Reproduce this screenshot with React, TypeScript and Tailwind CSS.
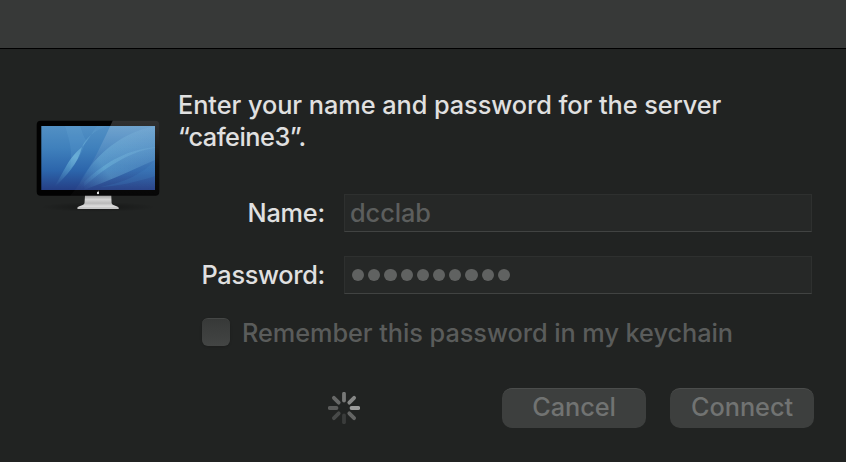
import React from "react";

function Display() {
  return (
    <svg width="136" height="100" viewBox="30 115 136 100" className="block" aria-hidden="true">
      <defs>
        <linearGradient id="sky" x1="0" y1="0" x2="0" y2="1">
          <stop offset="0" stopColor="#5290c4" />
          <stop offset="0.35" stopColor="#3f80bc" />
          <stop offset="0.7" stopColor="#2c65ab" />
          <stop offset="1" stopColor="#253f86" />
        </linearGradient>
        <linearGradient id="ray" gradientUnits="userSpaceOnUse" x1="55" y1="186" x2="96" y2="128">
          <stop offset="0" stopColor="#70c0e0" stopOpacity="0" />
          <stop offset="0.5" stopColor="#86d0e8" stopOpacity="0.6" />
          <stop offset="1" stopColor="#86c8ea" stopOpacity="0.08" />
        </linearGradient>
        <linearGradient id="sweep" gradientUnits="userSpaceOnUse" x1="82" y1="190" x2="155" y2="140">
          <stop offset="0" stopColor="#5fb0dc" stopOpacity="0" />
          <stop offset="0.35" stopColor="#78c8e6" stopOpacity="0.45" />
          <stop offset="1" stopColor="#8accec" stopOpacity="0.14" />
        </linearGradient>
        <linearGradient id="glare" x1="0" y1="0" x2="0" y2="1">
          <stop offset="0" stopColor="#fff" stopOpacity="0.19" />
          <stop offset="0.6" stopColor="#fff" stopOpacity="0.05" />
          <stop offset="1" stopColor="#fff" stopOpacity="0.02" />
        </linearGradient>
        <linearGradient id="stand" x1="0" y1="0" x2="0" y2="1">
          <stop offset="0" stopColor="#a4a4a4" />
          <stop offset="0.3" stopColor="#d4d4d4" />
          <stop offset="0.6" stopColor="#b9b9b9" />
          <stop offset="0.85" stopColor="#dedede" />
          <stop offset="1" stopColor="#b0b0b0" />
        </linearGradient>
        <radialGradient id="shade">
          <stop offset="0" stopColor="#000" stopOpacity="0.35" />
          <stop offset="1" stopColor="#000" stopOpacity="0" />
        </radialGradient>
        <clipPath id="screen"><rect x="41.3" y="126" width="113.7" height="64" /></clipPath>
        <clipPath id="bezel"><rect x="36.7" y="120.7" width="122.6" height="75" rx="4" /></clipPath>
      </defs>
      <ellipse cx="98" cy="207" rx="58" ry="5" fill="url(#shade)" />
      <rect x="36.7" y="120.7" width="122.6" height="75" rx="4" fill="#020202" />
      <g clipPath="url(#screen)">
        <rect x="41" y="126" width="114" height="64" fill="url(#sky)" />
        <path d="M52 190C64 174 66 160 82 147C87 142 92 133 97 126H108C94 130 86 138 82 147C78 164 66 176 52 190Z" fill="url(#ray)" />
        <path d="M65 126C70 142 73 153 70 169C79 161 83 150 86 140C82 134 82 130 80 126Z" fill="#75bbe2" opacity="0.14" />
        <path d="M80 182C92 160 116 134 155 126V148C130 151 104 168 80 190Z" fill="url(#sweep)" opacity="0.75" />
        <path d="M84 182C108 160 128 150 155 147V160C128 172 108 181 84 190Z" fill="url(#sweep)" opacity="0.75" />
        <path d="M100 187C122 183 142 175 155 160V176C138 182 118 186 100 187Z" fill="#3d85c4" opacity="0.22" />
      </g>
      <path d="M113 120H160V196H70C86 178 101 146 113 120Z" fill="url(#glare)" clipPath="url(#bezel)" />
      <ellipse cx="98" cy="193" rx="1.1" ry="1.2" fill="#ededed" />
      <path d="M98.1 191.9Q98.3 191 99 191" stroke="#ddd" strokeWidth=".6" fill="none" />
      <path d="M95 195.8H121.3L121.6 203C122 206 128.8 205.8 128.8 208.2H87.3C87.3 205.8 94 206 94.5 203Z" fill="url(#stand)" transform="translate(-10 0)" />
      <path d="M77.5 208.3H118.7" stroke="#e9e9e9" strokeWidth="1" />
    </svg>
  );
}

const spokes = ["#9b9c9b", "#646564", "#3a3c3b", "#484a49", "#5a5b5a", "#676867", "#777877", "#868786"];

function Spinner() {
  return (
    <svg width="32" height="32" viewBox="-16 -16 32 32" aria-label="Loading">
      {spokes.map((color, i) => (
        <path key={i} d="M7.5 0H14.3" stroke={color} strokeWidth="3.8" strokeLinecap="round" transform={`rotate(${i * 45})`} />
      ))}
    </svg>
  );
}

function Field({ children }: { children: React.ReactNode }) {
  return (
    <div className="flex h-[38px] w-[468px] items-center border border-[#2e302f] border-b-[#414342] bg-[#262827] pl-[5px] text-[#5c5e5d]">
      {children}
    </div>
  );
}

export default function App() {
  return (
    <main className="h-[462px] w-[846px] overflow-hidden bg-[#212322] font-['Inter',sans-serif] text-[25.3px] font-[450] leading-8 tracking-[-0.05px] text-[#e0e0e0]">
      <header className="h-[49px] border-b border-black bg-[#373938]" />
      <div className="flex">
        <div className="w-[178px] shrink-0 pl-[30px] pt-[66px]"><Display /></div>
        <h1 className="whitespace-nowrap pt-10 font-[450]">
          <span className="block w-fit">Enter your name and password for the server</span>
          <span className="block w-fit tracking-[-0.5px]">“cafeine3”.</span>
        </h1>
      </div>
      <form className="-mt-[21px]">
        <div className="flex gap-[18px]">
          <div className="flex h-[38px] w-[326px] items-center justify-end pr-px"><span className="tracking-[-0.2px]">Name:</span></div>
          <Field><span>dcclab</span></Field>
        </div>
        <div className="mt-6 flex gap-[18px]">
          <div className="flex h-[38px] w-[326px] items-center justify-end pr-px"><span className="tracking-[-0.3px]">Password:</span></div>
          <Field>
            <span className="flex gap-1 pl-0.5">
              {Array.from({ length: 10 }, (_, i) => <i key={i} className="size-[12.2px] rounded-full bg-[#606261]" />)}
            </span>
          </Field>
        </div>
        <div className="mt-6 flex h-7 items-center gap-3 pl-[202px] text-[#5a5c5b]">
          <div className="size-7 rounded-[6px] border-t border-[#454746] bg-linear-to-b from-[#373938] to-[#434544] shadow-sm" />
          <span className="whitespace-nowrap pt-0.5">Remember this password in my keychain</span>
        </div>
        <div className="mt-[42px] flex h-10 items-center pl-[328px] text-[#717372]">
          <Spinner />
          <button className="ml-[142px] flex h-10 w-36 items-center justify-center rounded-[10px] border-t border-[#4b4d4c] bg-[#3d3f3e] pb-1"><span>Cancel</span></button>
          <button className="ml-6 flex h-10 w-36 items-center justify-center rounded-[10px] border-t border-[#4b4d4c] bg-[#3d3f3e] pb-1"><span>Connect</span></button>
        </div>
      </form>
    </main>
  );
}
